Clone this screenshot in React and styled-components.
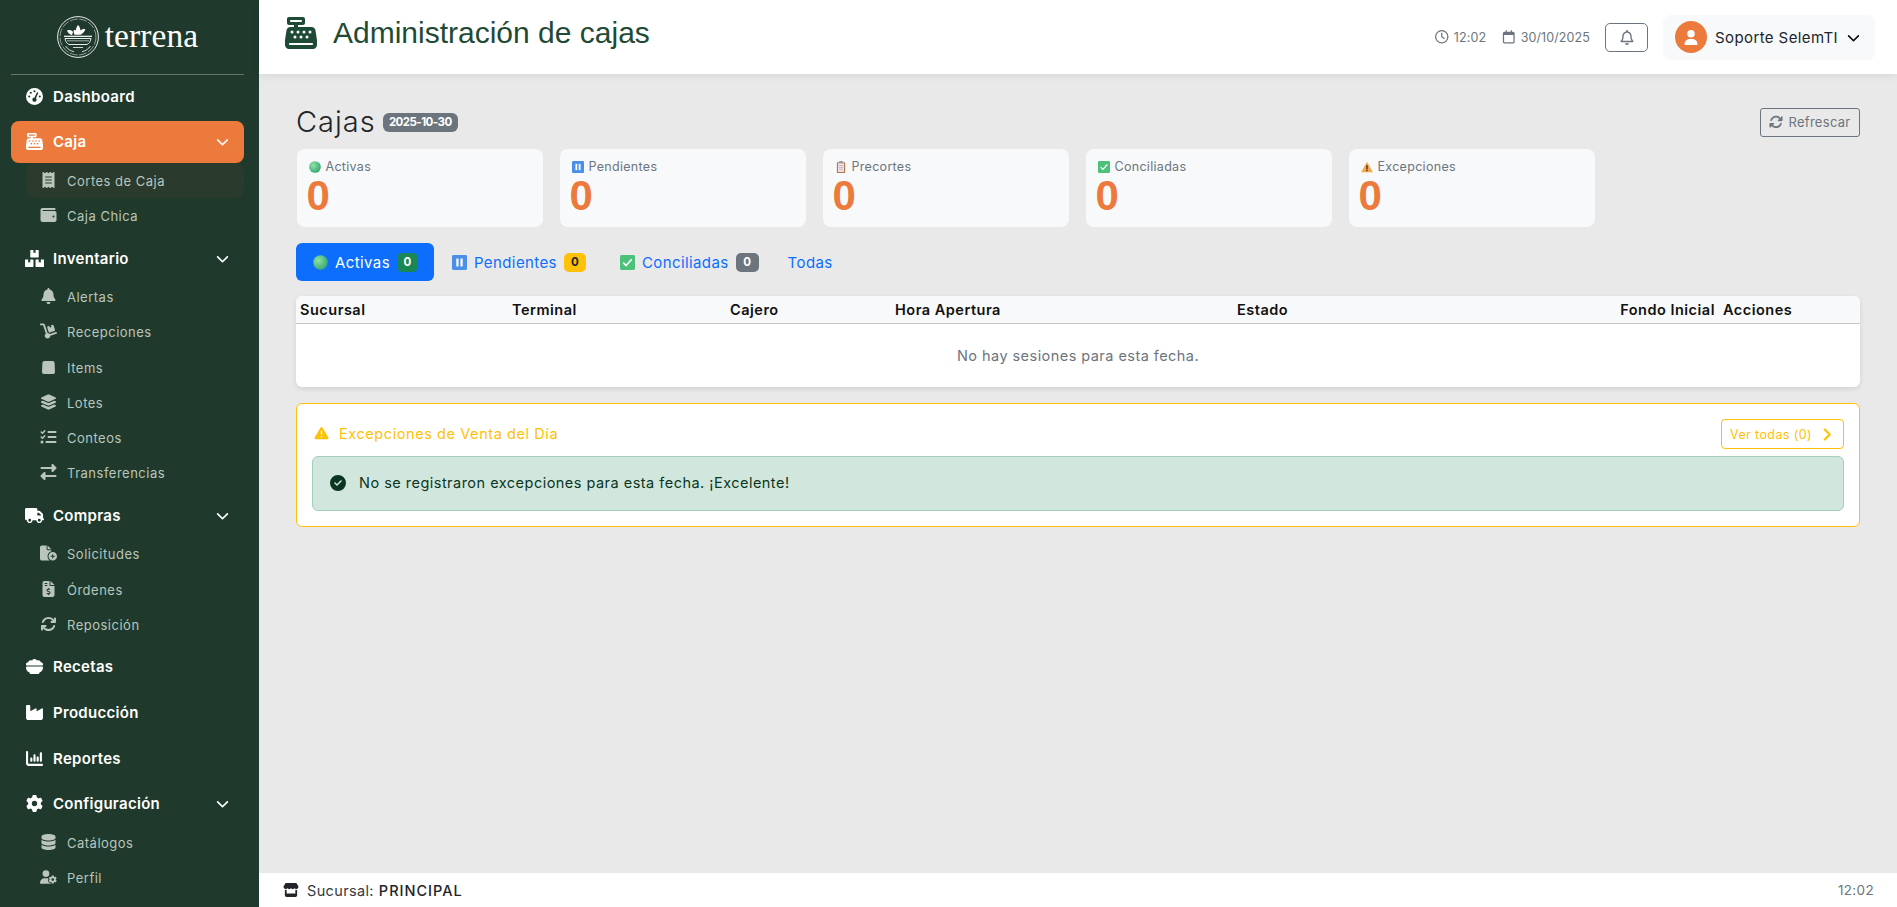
import React from 'react';
import styled, { createGlobalStyle } from 'styled-components';
import { FaBoxes } from 'react-icons/fa';
import {
  FaGaugeHigh, FaCashRegister, FaReceipt, FaWallet, FaBell, FaDolly,
  FaLayerGroup, FaListCheck, FaRightLeft, FaTruck, FaFileCirclePlus, FaFileInvoiceDollar, FaArrowsRotate,
  FaBowlFood, FaIndustry, FaChartColumn, FaGear, FaDatabase, FaUserGear, FaChevronDown, FaChevronRight,
  FaStore, FaRegClock, FaRegCalendar, FaRegBell, FaUser, FaTriangleExclamation, FaCircleCheck,
} from 'react-icons/fa6';

const UI = '"Inter", "Noto Sans", sans-serif';
const ORANGE = '#ec7a3c';

const Global = createGlobalStyle`
  html, body { margin: 0; padding: 0; height: 100%; }
  body { font-family: ${UI}; background: #e9e9e9; overflow: hidden; }
  * { box-sizing: border-box; }
`;

const Shell = styled.div`
  display: flex;
  width: 1897px;
  height: 907px;
  overflow: hidden;
`;

const Sidebar = styled.aside`
  width: 259px;
  flex: none;
  height: 907px;
  background: #1f3a2c;
  padding: 0 15px 0 11px;
  color: #fff;
`;

const Brand = styled.div`
  height: 75px;
  display: flex;
  align-items: center;
  justify-content: center;
  gap: 6px;
  padding: 0 0 1px 0;
  border-bottom: 1px solid rgba(255, 255, 255, 0.3);
`;

const BrandName = styled.span`
  font-family: "Liberation Serif", serif;
  font-size: 33.5px;
  line-height: 1;
  color: #fff;
  margin-top: -2px;
  letter-spacing: 0.1px;
`;

const Menu = styled.nav`
  display: flex;
  flex-direction: column;
  gap: 3.6px;
`;

const TopItem = styled.div`
  height: 42px;
  display: flex;
  align-items: center;
  padding: 0 15px;
  border-radius: 8px;
  background: ${p => (p.$active ? ORANGE : 'transparent')};
  font-size: 15px;
  font-weight: 600;
  letter-spacing: 0.3px;
  color: #fff;
  svg.lead { width: 19px; height: 17px; flex: none; margin: 0 9px 0 -1px; }
  svg.chev { width: 13px; height: 13px; margin-left: auto; }
`;

const SubList = styled.div`
  display: flex;
  flex-direction: column;
  margin: 0.5px 0 0 15px;
`;

const SubItem = styled.div`
  height: 35.2px;
  display: flex;
  align-items: center;
  padding-left: 14px;
  border-radius: 8px;
  background: ${p => (p.$active ? '#2a3a2c' : 'transparent')};
  font-size: 13px;
  letter-spacing: 0.5px;
  color: #b9c5bd;
  svg { width: 17px; height: 16px; flex: none; margin-right: 10px; margin-top: -2px; }
`;

const Main = styled.div`
  flex: 1;
  min-width: 0;
  display: flex;
  flex-direction: column;
  height: 907px;
`;

const TopBar = styled.header`
  height: 74px;
  flex: none;
  background: #fff;
  display: flex;
  align-items: center;
  padding: 0 22px 8px 26px;
  box-shadow: 0 2px 8px rgba(0, 0, 0, 0.08);
  position: relative;
  z-index: 1;
`;

const PageIcon = styled(FaCashRegister)`
  width: 32px;
  height: 32px;
  color: #1f4a35;
  margin-right: 16px;
`;

const PageTitle = styled.h1`
  margin: 0;
  font-family: "Liberation Sans", sans-serif;
  font-size: 30px;
  font-weight: 400;
  color: #1f4a35;
`;

const TopRight = styled.div`
  margin-left: auto;
  display: flex;
  align-items: center;
  margin-top: 8px;
`;

const Meta = styled.span`
  display: flex;
  align-items: center;
  gap: 5px;
  font-size: 12.5px;
  letter-spacing: 0.1px;
  color: #6c757d;
  margin-right: ${p => p.$gap}px;
  svg { width: 13.5px; height: 13.5px; }
`;

const BellBtn = styled.button`
  width: 43px;
  height: 29px;
  border: 1px solid #6c757d;
  border-radius: 5px;
  background: #fff;
  color: #6c757d;
  display: flex;
  align-items: center;
  justify-content: center;
  margin-right: 15px;
  padding: 0;
  svg { width: 14px; height: 15px; }
`;

const UserBtn = styled.div`
  width: 212px;
  height: 45px;
  background: #f8f9fa;
  border-radius: 8px;
  display: flex;
  align-items: center;
  padding: 0 15px 0 12px;
  font-size: 15px;
  letter-spacing: 0.4px;
  color: #212529;
  svg.chev { width: 13px; height: 13px; margin-left: auto; color: #111; }
`;

const Avatar = styled.span`
  width: 32px;
  height: 32px;
  border-radius: 50%;
  background: ${ORANGE};
  color: #fff;
  display: flex;
  align-items: center;
  justify-content: center;
  margin-right: 8px;
  svg { width: 14px; height: 15px; }
`;

const Content = styled.main`
  flex: 1;
  padding: 33px 37px 0;
  display: flex;
  flex-direction: column;
`;

const HeadRow = styled.div`
  height: 30px;
  display: flex;
  align-items: center;
  margin-bottom: 12px;
`;

const H3 = styled.h3`
  margin: -2px 7px 0 0;
  font-size: 29px;
  font-weight: 300;
  letter-spacing: 1px;
  color: #212529;
  white-space: nowrap;
`;

const DateBadge = styled.span`
  background: #6c757d;
  color: #fff;
  border-radius: 6px;
  font-size: 11.5px;
  font-weight: 700;
  letter-spacing: -0.55px;
  height: 19px;
  width: 75px;
  white-space: nowrap;
  display: flex;
  align-items: center;
  justify-content: center;
`;

const RefreshBtn = styled.button`
  margin-left: auto;
  width: 100px;
  height: 29px;
  border: 1px solid #6c757d;
  border-radius: 3px;
  background: transparent;
  color: #6c757d;
  font-family: ${UI};
  font-size: 13px;
  letter-spacing: 0.3px;
  display: flex;
  align-items: center;
  justify-content: center;
  gap: 5px;
  padding: 0;
  svg { width: 14px; height: 14px; }
`;

const KpiGrid = styled.div`
  display: grid;
  grid-template-columns: repeat(5, 246px);
  gap: 17px;
  margin-bottom: 16px;
  padding-left: 0.5px;
`;

const Kpi = styled.div`
  height: 78px;
  background: #f8f9fa;
  border-radius: 8px;
  padding: 9px 10px 0 10px;
`;

const KpiLabel = styled.div`
  display: flex;
  align-items: center;
  gap: 5px;
  height: 17px;
  margin-left: 2px;
  font-size: 12.5px;
  letter-spacing: 0.3px;
  color: #6c757d;
  svg { width: 12px; height: 12px; flex: none; }
`;

const KpiValue = styled.div`
  font-family: "Liberation Sans", sans-serif;
  font-size: 42px;
  font-weight: 700;
  line-height: 42px;
  color: ${ORANGE};
`;

const Tabs = styled.div`
  display: flex;
  align-items: center;
  height: 38px;
  margin-bottom: 15px;
`;

const Tab = styled.div`
  height: 38px;
  display: flex;
  align-items: center;
  gap: 7px;
  padding: 0 ${p => p.$r || 16}px 0 ${p => p.$l || 16}px;
  border-radius: 6px;
  background: ${p => (p.$active ? '#0d6efd' : 'transparent')};
  color: ${p => (p.$active ? '#fff' : '#0d6efd')};
  font-size: 15px;
  letter-spacing: 0.4px;
  svg { width: 15px; height: 15px; flex: none; }
`;

const CountBadge = styled.span`
  width: ${p => p.$w}px;
  height: 19px;
  border-radius: 5px;
  background: ${p => p.$bg};
  color: ${p => p.$fg};
  font-size: 11.5px;
  font-weight: 700;
  letter-spacing: 0;
  display: flex;
  align-items: center;
  justify-content: center;
`;

const TableWrap = styled.div`
  background: #fff;
  border-radius: 6px;
  box-shadow: 0 2px 5px rgba(0, 0, 0, 0.1);
  margin-bottom: 16px;
  overflow: hidden;
`;

const Table = styled.table`
  width: 100%;
  table-layout: fixed;
  border-collapse: collapse;
`;

const Th = styled.th`
  width: ${p => p.$w}px;
  height: 27px;
  padding: 0 4px;
  background: #f8f9fa;
  border-bottom: 1px solid #c4c6c8;
  text-align: ${p => p.$align || 'left'};
  font-size: 14.5px;
  font-weight: 600;
  color: #111;
  letter-spacing: 0.5px;
  white-space: nowrap;
`;

const Empty = styled.td`
  height: 64px;
  text-align: center;
  font-size: 14.5px;
  letter-spacing: 0.45px;
  color: #6c757d;
`;

const ExcCard = styled.section`
  height: 124px;
  background: #fff;
  border: 1px solid #ffc107;
  border-radius: 6px;
  padding: 15px 15px 0;
`;

const ExcHead = styled.div`
  height: 30px;
  display: flex;
  align-items: center;
  margin-bottom: 7px;
`;

const ExcTitle = styled.div`
  display: flex;
  align-items: center;
  gap: 10px;
  margin: -2px 0 0 2px;
  font-size: 14.5px;
  letter-spacing: 0.58px;
  color: #ffc107;
  svg { width: 15px; height: 14px; }
`;

const SeeAll = styled.button`
  margin-left: auto;
  width: 123px;
  height: 30px;
  background: #fff;
  border: 1px solid #ffc107;
  border-radius: 4px;
  color: #ffc107;
  font-family: ${UI};
  font-size: 12.5px;
  letter-spacing: 0.4px;
  display: flex;
  align-items: center;
  justify-content: space-between;
  padding: 0 10px 0 8px;
  svg { width: 13px; height: 13px; stroke: currentColor; stroke-width: 32px; }
`;

const SuccessAlert = styled.div`
  height: 55px;
  background: #d1e7dd;
  border: 1px solid #a3cfbb;
  border-radius: 6px;
  color: #0a3622;
  display: flex;
  align-items: center;
  gap: 13px;
  padding: 0 17px 2px;
  font-size: 14.5px;
  letter-spacing: 0.48px;
  svg { width: 16px; height: 16px; }
`;

const Footer = styled.footer`
  height: 34px;
  flex: none;
  background: #fff;
  display: flex;
  align-items: center;
  padding: 0 23px 0 24px;
  font-size: 14.5px;
  letter-spacing: 0.35px;
  color: #343a40;
`;

const FootIcon = styled(FaStore)`
  width: 16px;
  height: 14px;
  color: #212529;
  margin-right: 8px;
`;

const FootStrong = styled.span`
  color: #212529;
  font-weight: 500;
  letter-spacing: 1px;
  margin-left: 5px;
`;

const FootTime = styled.span`
  margin-left: auto;
  color: #6c757d;
  font-size: 13.5px;
`;

const Dot = () => (
  <svg viewBox="0 0 16 16">
    <defs>
      <radialGradient id="dotg" cx="35%" cy="35%" r="75%">
        <stop offset="0" stopColor="#8fe3a5" />
        <stop offset="1" stopColor="#2fa36d" />
      </radialGradient>
    </defs>
    <circle cx="8" cy="8" r="7.8" fill="url(#dotg)" />
  </svg>
);

const PauseEmoji = () => (
  <svg viewBox="0 0 16 16">
    <rect width="16" height="16" rx="1.5" fill="#4a8fe8" />
    <rect x="4.6" y="3.8" width="2.4" height="8.4" fill="#fff" />
    <rect x="9" y="3.8" width="2.4" height="8.4" fill="#fff" />
  </svg>
);

const ClipEmoji = () => (
  <svg viewBox="0 0 16 16">
    <rect x="2.5" y="1.5" width="11" height="14.5" rx="1" fill="#b9764e" />
    <rect x="4" y="3" width="8" height="11.5" fill="#f1e6ea" />
    <rect x="5.5" y="0" width="5" height="3" rx="0.8" fill="#9a9aa6" />
    <path d="M5 6h6M5 8.5h6M5 11h6" stroke="#b6a6b4" strokeWidth="1" />
  </svg>
);

const CheckEmoji = () => (
  <svg viewBox="0 0 16 16">
    <rect width="16" height="16" rx="1.5" fill="#4cc17a" />
    <path d="M3.5 8.2l3 3 6-6.6" stroke="#fff" strokeWidth="1.7" fill="none" />
  </svg>
);

const WarnEmoji = () => (
  <svg viewBox="0 0 16 16">
    <path d="M8 1l7.8 14H.2z" fill="#f6a94a" />
    <rect x="7.1" y="5.5" width="1.8" height="5.5" fill="#3a3030" />
    <rect x="7.1" y="11.8" width="1.8" height="1.8" fill="#3a3030" />
  </svg>
);

const ItemsIcon = () => (
  <svg viewBox="0 0 17 16" fill="currentColor">
    <path d="M4.5 2h8c1.200 0 2 .8 2.100 2l.4 9c0 1.100-.8 2-2 2H4c-1.200 0-2-.9-2-2l.4-9c.1-1.200.9-2 2.100-2z" />
  </svg>
);

const LogoMark = () => (
  <svg width="42" height="42" viewBox="0 0 42 42" fill="none" stroke="#fff">
    <circle cx="21" cy="21" r="20.4" strokeWidth="0.9" />
    <circle cx="21" cy="21" r="18" strokeWidth="0.5" strokeDasharray="8 1.5" />
    <path d="M10 14.500c2-1 4.500-.5 6 1.500l-1 3c-2.200-.3-4-2-5-4.500z" fill="#fff" stroke="none" />
    <path d="M21 9c1.500 1.500 2.500 3.500 2.300 5.500 1.200-1 3-1.700 5-1.400-.5 2.500-2.200 4.500-4.700 5.600h-6c-.8-1.300-1.200-3-.8-4.600.8-.2 1.500 0 2 .3C19 12.500 19.800 10.500 21 9z" fill="#fff" stroke="none" />
    <path d="M7 20.300h28" strokeWidth="1.2" />
    <path d="M8 22.500h26c-.5 3.400-2 5-4 6H12c-2-1-3.500-2.600-4-6z" strokeWidth="0.9" />
    <path d="M10 24.800h22" strokeWidth="0.6" />
    <path d="M8.500 30c2 3 5 5 8.500 5.700M33.500 30c-2 3-5 5-8.500 5.700M16 31.500h10" strokeWidth="0.8" />
  </svg>
);

const subs = {
  caja: [
    [FaReceipt, 'Cortes de Caja', true],
    [FaWallet, 'Caja Chica'],
  ],
  inv: [
    [FaBell, 'Alertas'],
    [FaDolly, 'Recepciones'],
    [ItemsIcon, 'Items'],
    [FaLayerGroup, 'Lotes'],
    [FaListCheck, 'Conteos'],
    [FaRightLeft, 'Transferencias'],
  ],
  compras: [
    [FaFileCirclePlus, 'Solicitudes'],
    [FaFileInvoiceDollar, 'Órdenes'],
    [FaArrowsRotate, 'Reposición'],
  ],
  conf: [
    [FaDatabase, 'Catálogos'],
    [FaUserGear, 'Perfil'],
  ],
};

const Group = ({ icon: Icon, label, active, items }) => (
  <div>
    <TopItem $active={active}>
      <Icon className="lead" />
      {label}
      {items && <FaChevronDown className="chev" />}
    </TopItem>
    {items && (
      <SubList>
        {items.map(([I, t, on]) => (
          <SubItem key={t} $active={on}>
            <I />
            {t}
          </SubItem>
        ))}
      </SubList>
    )}
  </div>
);

const cols = [
  ['Sucursal', 212],
  ['Terminal', 218],
  ['Cajero', 165],
  ['Hora Apertura', 342],
  ['Estado', 382],
  ['Fondo Inicial', 104, 'right'],
  ['Acciones', 141],
];

const kpis = [
  [Dot, 'Activas'],
  [PauseEmoji, 'Pendientes'],
  [ClipEmoji, 'Precortes'],
  [CheckEmoji, 'Conciliadas'],
  [WarnEmoji, 'Excepciones'],
];

export default function App() {
  return (
    <Shell>
      <Global />
      <Sidebar>
        <Brand>
          <LogoMark />
          <BrandName>terrena</BrandName>
        </Brand>
        <Menu>
          <Group icon={FaGaugeHigh} label="Dashboard" />
          <Group icon={FaCashRegister} label="Caja" active items={subs.caja} />
          <Group icon={FaBoxes} label="Inventario" items={subs.inv} />
          <Group icon={FaTruck} label="Compras" items={subs.compras} />
          <Group icon={FaBowlFood} label="Recetas" />
          <Group icon={FaIndustry} label="Producción" />
          <Group icon={FaChartColumn} label="Reportes" />
          <Group icon={FaGear} label="Configuración" items={subs.conf} />
        </Menu>
      </Sidebar>
      <Main>
        <TopBar>
          <PageIcon />
          <PageTitle>Administración de cajas</PageTitle>
          <TopRight>
            <Meta $gap={16}><FaRegClock />12:02</Meta>
            <Meta $gap={15}><FaRegCalendar />30/10/2025</Meta>
            <BellBtn><FaRegBell /></BellBtn>
            <UserBtn>
              <Avatar><FaUser /></Avatar>
              Soporte SelemTI
              <FaChevronDown className="chev" />
            </UserBtn>
          </TopRight>
        </TopBar>
        <Content>
          <HeadRow>
            <H3>Cajas</H3>
            <DateBadge>2025-10-30</DateBadge>
            <RefreshBtn><FaArrowsRotate />Refrescar</RefreshBtn>
          </HeadRow>
          <KpiGrid>
            {kpis.map(([I, t]) => (
              <Kpi key={t}>
                <KpiLabel><I />{t}</KpiLabel>
                <KpiValue>0</KpiValue>
              </Kpi>
            ))}
          </KpiGrid>
          <Tabs>
            <Tab $active $l={17}>
              <Dot />Activas
              <CountBadge $w={21} $bg="#198754" $fg="#fff">0</CountBadge>
            </Tab>
            <Tab $l={18} $r={18}>
              <PauseEmoji />Pendientes
              <CountBadge $w={22} $bg="#ffc107" $fg="#212529">0</CountBadge>
            </Tab>
            <Tab>
              <CheckEmoji />Conciliadas
              <CountBadge $w={23} $bg="#6c757d" $fg="#fff">0</CountBadge>
            </Tab>
            <Tab $l={13}>Todas</Tab>
          </Tabs>
          <TableWrap>
            <Table>
              <thead>
                <tr>
                  {cols.map(([t, w, a]) => (
                    <Th key={t} $w={w} $align={a}>{t}</Th>
                  ))}
                </tr>
              </thead>
              <tbody>
                <tr>
                  <Empty colSpan={7}>No hay sesiones para esta fecha.</Empty>
                </tr>
              </tbody>
            </Table>
          </TableWrap>
          <ExcCard>
            <ExcHead>
              <ExcTitle><FaTriangleExclamation />Excepciones de Venta del Día</ExcTitle>
              <SeeAll>Ver todas (0)<FaChevronRight /></SeeAll>
            </ExcHead>
            <SuccessAlert>
              <FaCircleCheck />
              No se registraron excepciones para esta fecha. ¡Excelente!
            </SuccessAlert>
          </ExcCard>
        </Content>
        <Footer>
          <FootIcon />
          Sucursal:<FootStrong>PRINCIPAL</FootStrong>
          <FootTime>12:02</FootTime>
        </Footer>
      </Main>
    </Shell>
  );
}
